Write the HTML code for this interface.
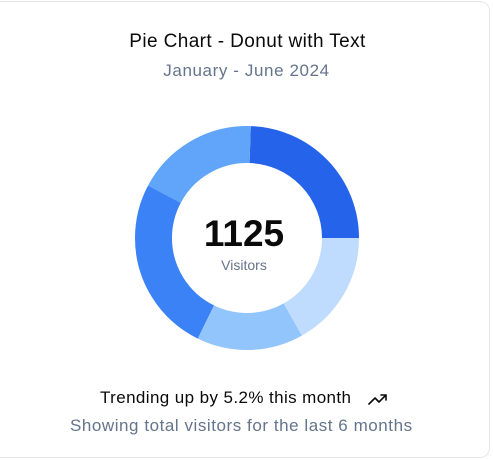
<!DOCTYPE html>
<html><head><style>
html,body{margin:0;padding:0;background:#fff;width:493px;height:460px;overflow:hidden;font-family:"Liberation Sans",sans-serif;}
.card{position:absolute;left:-12px;top:1px;width:502px;height:457px;border:1px solid #e5e7eb;border-radius:10px;box-sizing:border-box;}
.t{position:absolute;left:0;width:493px;text-align:center;white-space:nowrap;}
</style></head><body>
<div class="card"></div>
<div class="t" style="top:31px;font-size:19px;letter-spacing:0.4px;color:#0a0a0a;font-weight:500;left:1px;">Pie Chart - Donut with Text</div>
<div class="t" style="top:61px;font-size:17px;letter-spacing:0.6px;color:#64748b;">January - June 2024</div>
<svg style="position:absolute;left:0;top:0" width="493" height="460">
<g transform="translate(247,238) scale(1,-1)" fill="none" stroke-width="37">
<circle r="93.5" stroke="#2563eb" stroke-dasharray="143.6 600" stroke-dashoffset="0"/>
<circle r="93.5" stroke="#60a5fa" stroke-dasharray="104.4 600" stroke-dashoffset="-143.6"/>
<circle r="93.5" stroke="#3b82f6" stroke-dasharray="149.9 600" stroke-dashoffset="-248"/>
<circle r="93.5" stroke="#93c5fd" stroke-dasharray="90.4 600" stroke-dashoffset="-397.9"/>
<circle r="93.5" stroke="#bfdbfe" stroke-dasharray="99.3 600" stroke-dashoffset="-488.3"/>
</g>
<text x="244" y="246" text-anchor="middle" font-family="Liberation Sans" font-weight="bold" font-size="37" fill="#0a0a0a">1125</text>
<text x="244" y="270" text-anchor="middle" font-family="Liberation Sans" font-size="14" fill="#64748b">Visitors</text>
<path d="M369 404 L375 398 L379 402 L386 395 M381 395 L386 395 L386 400" fill="none" stroke="#0a0a0a" stroke-width="1.6" stroke-linecap="round" stroke-linejoin="round"/>
</svg>
<div style="position:absolute;left:100px;top:388px;font-size:17px;letter-spacing:0.4px;color:#0a0a0a;white-space:nowrap;">Trending up by 5.2% this month</div>
<div style="position:absolute;left:70px;top:416px;font-size:17px;letter-spacing:0.55px;color:#64748b;white-space:nowrap;">Showing total visitors for the last 6 months</div>
</body></html>
